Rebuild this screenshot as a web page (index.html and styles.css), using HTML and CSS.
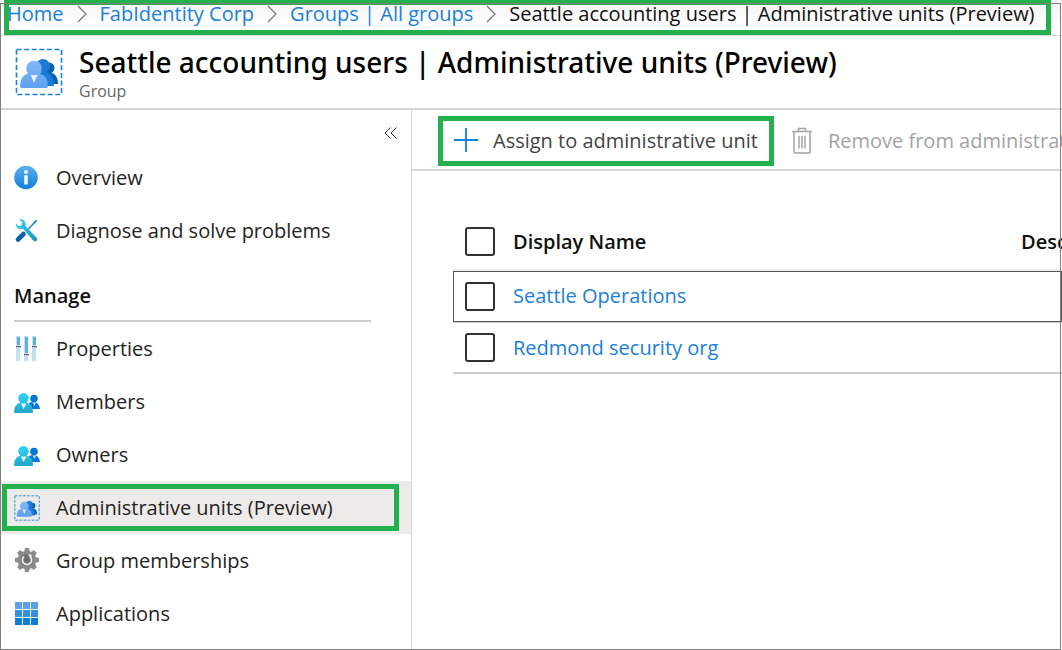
FILE: index.html
```html
<!DOCTYPE html>
<html lang="en">
<head>
<meta charset="utf-8">
<title>Seattle accounting users | Administrative units (Preview)</title>
<link rel="stylesheet" href="styles.css">
</head>
<body>
<svg class="defs" aria-hidden="true">
  <defs>
    <linearGradient id="blue" x1="0" y1="0" x2="0" y2="1"><stop offset="0" stop-color="#5eb0ef"/><stop offset="1" stop-color="#0f80da"/></linearGradient>
    <linearGradient id="soft" x1="0" y1="0" x2="0" y2="1"><stop offset="0" stop-color="#83b9f9"/><stop offset="1" stop-color="#5e9ff0"/></linearGradient>
    <linearGradient id="cyan" x1="0" y1="0" x2="0" y2="1"><stop offset="0" stop-color="#32d4f5"/><stop offset="1" stop-color="#22a5cc"/></linearGradient>
    <linearGradient id="wrench" gradientUnits="userSpaceOnUse" x1="2" y1="2" x2="22" y2="22"><stop offset="0" stop-color="#32d4f5"/><stop offset="1" stop-color="#1b93bf"/></linearGradient>
    <symbol id="unit" viewBox="0 0 48 48">
      <path fill="none" stroke="#1382dc" stroke-width="1.6" stroke-dasharray="5 2.6" d="M1.500 1.500H46.500V46.500H1.500Z"/>
      <circle cx="34" cy="20" r="5.500" fill="#0063b1"/>
      <path fill="#0063b1" d="M28 36V27Q34 23 39 26Q43 29 43 36Z"/>
      <circle cx="28" cy="18" r="7" fill="#1b7cd6"/>
      <path fill="#1b7cd6" d="M22 38V26Q31 22 35 26Q39 30 39 38Z"/>
      <path fill="url(#soft)" d="M5 38Q5 28 13 25.500A7.800 7.800 0 1 1 25 25.500Q33 28 33 38Q33 40 31 40H7Q5 40 5 38Z"/>
      <path fill="#e7f2ff" d="M15.500 26.500Q19 28 22.500 26.500L19 35Z"/>
    </symbol>
    <symbol id="people" viewBox="0 0 26 22">
      <circle cx="20" cy="7.500" r="3.800" fill="#0078d4"/>
      <path fill="#0078d4" d="M15 12Q20 10 23.500 12.500Q26 15 26 18H16Z"/>
      <path fill="#c8e6ff" d="M18.500 11.500H22L20.500 15Z"/>
      <path fill="url(#cyan)" d="M0 21Q0 13 6.500 11.500A5.200 5.200 0 1 1 12.500 11.500Q19 13 19 21Q19 22 18 22H1Q0 22 0 21Z"/>
      <path fill="#e6f9ff" d="M7 12.500H12.500L9.500 18Z"/>
    </symbol>
  </defs>
</svg>
<div class="page">
  <nav class="breadcrumb" aria-label="Breadcrumb">
    <ol class="crumbs">
      <li><a href="#">Home</a></li>
      <li><svg class="chevron" viewBox="0 0 10 18"><path d="M1 1L9 9L1 17"/></svg><a href="#">FabIdentity Corp</a></li>
      <li><svg class="chevron" viewBox="0 0 10 18"><path d="M1 1L9 9L1 17"/></svg><a href="#">Groups | All groups</a></li>
      <li><svg class="chevron" viewBox="0 0 10 18"><path d="M1 1L9 9L1 17"/></svg><span aria-current="page">Seattle accounting users | Administrative units (Preview)</span></li>
    </ol>
  </nav>
  <header class="header">
    <svg class="header-icon" aria-hidden="true"><use href="#unit"/></svg>
    <div>
      <h1>Seattle accounting users | Administrative units (Preview)</h1>
      <p class="kind">Group</p>
    </div>
  </header>
  <div class="body">
    <aside class="sidebar">
      <button class="collapse" type="button" aria-label="Collapse menu"><svg viewBox="0 0 14 12"><path d="M6.500 .5L1 6L6.500 11.500M12.500 .5L7 6L12.500 11.500"/></svg></button>
      <ul class="menu">
        <li><a href="#"><svg class="icon" viewBox="0 0 26 26"><circle cx="12" cy="12.500" r="11.800" fill="url(#blue)"/><circle cx="12" cy="7" r="1.900" fill="#fff"/><rect x="10.300" y="10.200" width="3.400" height="9.300" rx=".6" fill="#fff"/></svg>Overview</a></li>
        <li><a href="#"><svg class="icon" viewBox="0 0 26 26"><path fill="none" stroke="#1c8fc8" stroke-width="1.600" d="M22.500 2.500L13 12.500"/><path fill="#1c7fb8" d="M23.500 1.500L19.500 4L21 5.500Z"/><path stroke="#0c63a8" stroke-width="4.600" stroke-linecap="round" d="M4 21.500L9.500 16"/><path fill="url(#wrench)" d="M2 5.500Q1.500 9 4.500 10.500Q6.500 11.500 9 10.800L19.500 22.800Q21 24 22.500 22.700Q23.900 21.300 22.600 19.800L11.500 8.200Q12.200 5 10.300 2.700Q8 .5 5.200 1.300L8.300 4.500L7.400 7.500L4.800 8.200Z"/></svg>Diagnose and solve problems</a></li>
      </ul>
      <h2>Manage</h2>
      <ul class="menu">
        <li><a href="#"><svg class="icon" viewBox="0 0 26 26"><path fill="#c3e1f0" d="M2 0H6V25H2ZM10 0H14V25H10ZM18 0H22V25H18Z"/><path fill="#59b4d9" d="M3 1H6V9H3ZM11 1H14V17H11ZM19 1H22V9H19Z"/><path fill="#666" d="M2 10H7V11.300H2ZM10 18H15V19.300H10ZM18 10H23V11.300H18Z"/></svg>Properties</a></li>
        <li><a href="#"><svg class="icon people" aria-hidden="true"><use href="#people"/></svg>Members</a></li>
        <li><a href="#"><svg class="icon people" aria-hidden="true"><use href="#people"/></svg>Owners</a></li>
        <li class="selected"><a href="#" aria-current="page"><svg class="icon" aria-hidden="true"><use href="#unit"/></svg>Administrative units (Preview)</a></li>
        <li><a href="#"><svg class="icon" viewBox="0 0 26 26"><g fill="#8c8c8c"><circle cx="13" cy="12" r="9.300"/><g id="teeth"><path d="M11 0H15L15.800 4V20L15 24H11L10.200 20V4Z"/><path d="M1 10V14L5 14.800H21L25 14V10L21 9.200H5Z"/></g><use href="#teeth" transform="rotate(45 13 12)"/></g><circle cx="13" cy="12" r="6.300" fill="#707070"/><path fill="none" stroke="#eee" stroke-width="1.700" d="M10 8.500A4.600 4.600 0 1 0 16 8.500"/><path fill="#eee" d="M13.500 6.500H17.500V10.500Z"/></svg>Group memberships</a></li>
        <li><a href="#"><svg class="icon" viewBox="0 0 26 26"><path fill="#5ea0ef" d="M1 1H8V8H1ZM9 1H16V8H9ZM17 1H24V8H17Z"/><path fill="#348fe2" d="M1 9H8V16H1ZM9 9H16V16H9ZM17 9H24V16H17Z"/><path fill="#0e7dd7" d="M1 17H8V24H1ZM9 17H16V24H9ZM17 17H24V24H17Z"/></svg>Applications</a></li>
      </ul>
    </aside>
    <main class="main">
      <div class="toolbar">
        <button class="command assign" type="button"><svg viewBox="0 0 26 26"><path stroke="#1382dc" stroke-width="1.800" d="M13 0V24M1 12H25"/></svg>Assign to administrative unit</button>
        <button class="command remove" type="button" disabled><svg viewBox="0 0 22 27"><path fill="none" stroke="#a3a3a3" stroke-width="1.500" d="M1 4.500H21M7.500 4V1.500H14.500V4M3 5V25Q3 26 4 26H18Q19 26 19 25V5M8 9V21.500M11 9V21.500M14 9V21.500"/></svg>Remove from administrative unit</button>
      </div>
      <table class="units">
        <thead>
          <tr><th class="pick"><input type="checkbox" aria-label="Select all"></th><th class="name" scope="col">Display Name</th><th scope="col">Description</th></tr>
        </thead>
        <tbody>
          <tr class="focused"><td class="pick"><input type="checkbox" aria-label="Select Seattle Operations"></td><td><a href="#">Seattle Operations</a></td><td></td></tr>
          <tr><td class="pick"><input type="checkbox" aria-label="Select Redmond security org"></td><td><a href="#">Redmond security org</a></td><td></td></tr>
        </tbody>
      </table>
    </main>
  </div>
</div>
</body>
</html>
```
FILE: styles.css
```css
* { box-sizing: border-box; }

body {
  margin: 0;
  background: #fff;
  color: #323130;
  font-family: "Open Sans", "Noto Sans", sans-serif;
  font-size: 20px;
  line-height: 28px;
}

h1, h2, p, ul, ol { margin: 0; padding: 0; }
ul, ol { list-style: none; }
a { color: #1a80d8; text-decoration: none; }
button { border: 0; background: none; font: inherit; color: inherit; }
svg { display: block; flex: none; }
.defs { position: absolute; width: 0; height: 0; }

.page {
  position: relative;
  display: flex;
  flex-direction: column;
  min-height: 100vh;
  overflow: hidden;
}

/* thin frame drawn round the whole view */
.page::after {
  content: "";
  position: absolute;
  inset: 3px 1px 0 0;
  border: 1px solid #7f7f7f;
  pointer-events: none;
}

/* green callouts */
.breadcrumb::after, .selected::after, .assign::after {
  content: "";
  position: absolute;
  border: 5px solid #22b14c;
  pointer-events: none;
}

.breadcrumb {
  position: relative;
  height: 36px;
  border-bottom: 1px solid #d6d6d6;
  background: linear-gradient(#f2f2f2, #fff 24px);
}
.breadcrumb::after { inset: 0 11px 0 4px; }
.crumbs {
  display: flex;
  padding-left: 7px;
  white-space: nowrap;
  color: #111;
}
.crumbs li { display: flex; align-items: center; }
.chevron {
  width: 10px;
  height: 18px;
  margin: 0 13px;
  fill: none;
  stroke: #767676;
  stroke-width: 1.2;
}

.header {
  display: flex;
  align-items: center;
  gap: 16px;
  height: 74px;
  padding-left: 15px;
  border-bottom: 2px solid #d6d6d6;
}
.header-icon { width: 48px; height: 48px; }
h1 {
  color: #000;
  font-family: "Noto Sans", "Open Sans", sans-serif;
  font-size: 28px;
  font-weight: 500;
  line-height: 37px;
  white-space: nowrap;
}
.kind { color: #666; font-size: 16px; line-height: 20px; }

.body { display: flex; flex: 1; }

.sidebar {
  flex: none;
  width: 412px;
  border-right: 1px solid #d6d6d6;
}
.collapse {
  display: block;
  margin: 17px 13px 12px auto;
  padding: 0;
}
.collapse svg {
  width: 14px;
  height: 12px;
  fill: none;
  stroke: #323130;
}
.menu li { position: relative; }
.menu a {
  display: flex;
  align-items: center;
  gap: 16px;
  height: 53px;
  padding-left: 14px;
  color: #252423;
}
.icon { width: 26px; height: 26px; }
.people { height: 22px; }
h2 {
  margin: 25px 40px 0 14px;
  padding-bottom: 10px;
  border-bottom: 2px solid #ccc;
  color: #111;
  font-size: 20px;
  font-weight: 600;
}
.selected { background: #edebe9; }
.selected::after { inset: 3px 12px 3px 2px; }

.main { flex: 1; min-width: 0; overflow: hidden; }

.toolbar {
  display: flex;
  align-items: center;
  gap: 17px;
  height: 61px;
  padding: 2px 0 0 26px;
  border-bottom: 2px solid #d6d6d6;
  white-space: nowrap;
}
.command {
  position: relative;
  display: flex;
  flex: none;
  align-items: center;
  gap: 14px;
  padding: 0;
}
.assign { height: 50px; padding: 0 16px 0 15px; color: #444; }
.assign::after { inset: 0; }
.assign svg { width: 26px; height: 26px; }
.remove { gap: 15px; color: #a3a3a3; }
.remove svg { width: 22px; height: 27px; }

.units {
  width: calc(100% - 41px);
  margin: 41px 0 0 41px;
  border-collapse: collapse;
  table-layout: fixed;
  text-align: left;
}
.units th, .units td {
  height: 51px;
  padding: 0;
  overflow: hidden;
  white-space: nowrap;
}
.units th { height: 59px; color: #111; font-weight: 600; }
.units .pick { width: 60px; padding-left: 12px; }
.units .name { width: 508px; }
.units tbody tr { border-bottom: 2px solid #ccc; }
.units .focused {
  outline: 1px solid #555;
  outline-offset: -1px;
  box-shadow: 0 -2px #ebebeb;
}

input[type="checkbox"] {
  display: block;
  appearance: none;
  width: 30px;
  height: 29px;
  margin: 0;
  border: 2px solid #323130;
  border-radius: 3px;
  background: #fff;
}
input[type="checkbox"]:checked { background: #0078d4; }
```
